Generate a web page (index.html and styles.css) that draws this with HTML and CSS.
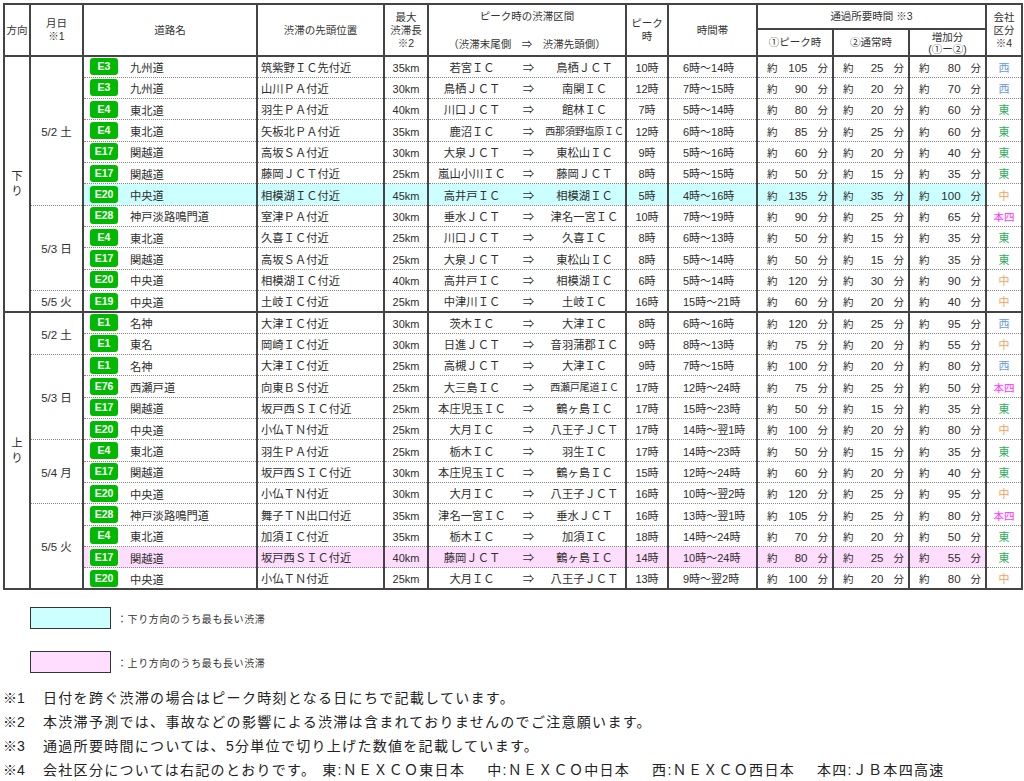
FILE: index.html
```html
<!DOCTYPE html>
<html lang="ja">
<head>
<meta charset="utf-8">
<title>渋滞予測</title>
<link rel="stylesheet" href="styles.css">
</head>
<body>
<table class="grid">
<colgroup>
<col class="c-dir"><col class="c-date"><col class="c-road"><col class="c-head"><col class="c-len"><col class="c-sec"><col class="c-peak"><col class="c-band"><col class="c-t1"><col class="c-t2"><col class="c-t3"><col class="c-co">
</colgroup>
<thead>
<tr class="h1">
<th rowspan="2">方向</th>
<th rowspan="2">月日<br>※1</th>
<th rowspan="2">道路名</th>
<th rowspan="2">渋滞の先頭位置</th>
<th rowspan="2">最大<br>渋滞長<br>※2</th>
<th rowspan="2" class="hsec"><div class="hsec-in"><span>ピーク時の渋滞区間</span><span>（渋滞末尾側　⇒　渋滞先頭側）</span></div></th>
<th rowspan="2">ピーク<br>時</th>
<th rowspan="2">時間帯</th>
<th colspan="3">通過所要時間 ※3</th>
<th rowspan="2">会社<br>区分<br>※4</th>
</tr>
<tr class="h2">
<th>①ピーク時</th>
<th>②通常時</th>
<th class="inc">増加分<br>(①ー②)</th>
</tr>
</thead>
<tbody class="down">
<tr>
<td class="dir" rowspan="12">下<br>り</td>
<td class="date" rowspan="7">5/2 土</td>
<td class="road"><div class="rd"><span class="badge">E3</span><span class="rn">九州道</span></div></td>
<td class="head">筑紫野ＩＣ先付近</td>
<td class="len">35km</td>
<td class="sec"><div class="sec3"><span>若宮ＩＣ</span><span>⇒</span><span>鳥栖ＪＣＴ</span></div></td>
<td class="peak">10時</td>
<td class="band">6時～14時</td>
<td class="t"><div class="tm"><span>約</span><b>105</b><span>分</span></div></td>
<td class="t"><div class="tm"><span>約</span><b>25</b><span>分</span></div></td>
<td class="t"><div class="tm"><span>約</span><b>80</b><span>分</span></div></td>
<td class="co west">西</td>
</tr>
<tr>
<td class="road"><div class="rd"><span class="badge">E3</span><span class="rn">九州道</span></div></td>
<td class="head">山川ＰＡ付近</td>
<td class="len">30km</td>
<td class="sec"><div class="sec3"><span>鳥栖ＪＣＴ</span><span>⇒</span><span>南関ＩＣ</span></div></td>
<td class="peak">12時</td>
<td class="band">7時～15時</td>
<td class="t"><div class="tm"><span>約</span><b>90</b><span>分</span></div></td>
<td class="t"><div class="tm"><span>約</span><b>20</b><span>分</span></div></td>
<td class="t"><div class="tm"><span>約</span><b>70</b><span>分</span></div></td>
<td class="co west">西</td>
</tr>
<tr>
<td class="road"><div class="rd"><span class="badge">E4</span><span class="rn">東北道</span></div></td>
<td class="head">羽生ＰＡ付近</td>
<td class="len">40km</td>
<td class="sec"><div class="sec3"><span>川口ＪＣＴ</span><span>⇒</span><span>館林ＩＣ</span></div></td>
<td class="peak">7時</td>
<td class="band">5時～14時</td>
<td class="t"><div class="tm"><span>約</span><b>80</b><span>分</span></div></td>
<td class="t"><div class="tm"><span>約</span><b>20</b><span>分</span></div></td>
<td class="t"><div class="tm"><span>約</span><b>60</b><span>分</span></div></td>
<td class="co east">東</td>
</tr>
<tr>
<td class="road"><div class="rd"><span class="badge">E4</span><span class="rn">東北道</span></div></td>
<td class="head">矢板北ＰＡ付近</td>
<td class="len">35km</td>
<td class="sec"><div class="sec3"><span>鹿沼ＩＣ</span><span>⇒</span><span class="narrow">西那須野塩原ＩＣ</span></div></td>
<td class="peak">12時</td>
<td class="band">6時～18時</td>
<td class="t"><div class="tm"><span>約</span><b>85</b><span>分</span></div></td>
<td class="t"><div class="tm"><span>約</span><b>25</b><span>分</span></div></td>
<td class="t"><div class="tm"><span>約</span><b>60</b><span>分</span></div></td>
<td class="co east">東</td>
</tr>
<tr>
<td class="road"><div class="rd"><span class="badge">E17</span><span class="rn">関越道</span></div></td>
<td class="head">高坂ＳＡ付近</td>
<td class="len">30km</td>
<td class="sec"><div class="sec3"><span>大泉ＪＣＴ</span><span>⇒</span><span>東松山ＩＣ</span></div></td>
<td class="peak">9時</td>
<td class="band">5時～16時</td>
<td class="t"><div class="tm"><span>約</span><b>60</b><span>分</span></div></td>
<td class="t"><div class="tm"><span>約</span><b>20</b><span>分</span></div></td>
<td class="t"><div class="tm"><span>約</span><b>40</b><span>分</span></div></td>
<td class="co east">東</td>
</tr>
<tr>
<td class="road"><div class="rd"><span class="badge">E17</span><span class="rn">関越道</span></div></td>
<td class="head">藤岡ＪＣＴ付近</td>
<td class="len">25km</td>
<td class="sec"><div class="sec3"><span>嵐山小川ＩＣ</span><span>⇒</span><span>藤岡ＪＣＴ</span></div></td>
<td class="peak">8時</td>
<td class="band">5時～15時</td>
<td class="t"><div class="tm"><span>約</span><b>50</b><span>分</span></div></td>
<td class="t"><div class="tm"><span>約</span><b>15</b><span>分</span></div></td>
<td class="t"><div class="tm"><span>約</span><b>35</b><span>分</span></div></td>
<td class="co east">東</td>
</tr>
<tr class="hl-cyan">
<td class="road"><div class="rd"><span class="badge">E20</span><span class="rn">中央道</span></div></td>
<td class="head">相模湖ＩＣ付近</td>
<td class="len">45km</td>
<td class="sec"><div class="sec3"><span>高井戸ＩＣ</span><span>⇒</span><span>相模湖ＩＣ</span></div></td>
<td class="peak">5時</td>
<td class="band">4時～16時</td>
<td class="t"><div class="tm"><span>約</span><b>135</b><span>分</span></div></td>
<td class="t"><div class="tm"><span>約</span><b>35</b><span>分</span></div></td>
<td class="t"><div class="tm"><span>約</span><b>100</b><span>分</span></div></td>
<td class="co mid">中</td>
</tr>
<tr>
<td class="date" rowspan="4">5/3 日</td>
<td class="road"><div class="rd"><span class="badge">E28</span><span class="rn">神戸淡路鳴門道</span></div></td>
<td class="head">室津ＰＡ付近</td>
<td class="len">30km</td>
<td class="sec"><div class="sec3"><span>垂水ＪＣＴ</span><span>⇒</span><span>津名一宮ＩＣ</span></div></td>
<td class="peak">10時</td>
<td class="band">7時～19時</td>
<td class="t"><div class="tm"><span>約</span><b>90</b><span>分</span></div></td>
<td class="t"><div class="tm"><span>約</span><b>25</b><span>分</span></div></td>
<td class="t"><div class="tm"><span>約</span><b>65</b><span>分</span></div></td>
<td class="co hon">本四</td>
</tr>
<tr>
<td class="road"><div class="rd"><span class="badge">E4</span><span class="rn">東北道</span></div></td>
<td class="head">久喜ＩＣ付近</td>
<td class="len">25km</td>
<td class="sec"><div class="sec3"><span>川口ＪＣＴ</span><span>⇒</span><span>久喜ＩＣ</span></div></td>
<td class="peak">8時</td>
<td class="band">6時～13時</td>
<td class="t"><div class="tm"><span>約</span><b>50</b><span>分</span></div></td>
<td class="t"><div class="tm"><span>約</span><b>15</b><span>分</span></div></td>
<td class="t"><div class="tm"><span>約</span><b>35</b><span>分</span></div></td>
<td class="co east">東</td>
</tr>
<tr>
<td class="road"><div class="rd"><span class="badge">E17</span><span class="rn">関越道</span></div></td>
<td class="head">高坂ＳＡ付近</td>
<td class="len">25km</td>
<td class="sec"><div class="sec3"><span>大泉ＪＣＴ</span><span>⇒</span><span>東松山ＩＣ</span></div></td>
<td class="peak">8時</td>
<td class="band">5時～14時</td>
<td class="t"><div class="tm"><span>約</span><b>50</b><span>分</span></div></td>
<td class="t"><div class="tm"><span>約</span><b>15</b><span>分</span></div></td>
<td class="t"><div class="tm"><span>約</span><b>35</b><span>分</span></div></td>
<td class="co east">東</td>
</tr>
<tr>
<td class="road"><div class="rd"><span class="badge">E20</span><span class="rn">中央道</span></div></td>
<td class="head">相模湖ＩＣ付近</td>
<td class="len">40km</td>
<td class="sec"><div class="sec3"><span>高井戸ＩＣ</span><span>⇒</span><span>相模湖ＩＣ</span></div></td>
<td class="peak">6時</td>
<td class="band">5時～14時</td>
<td class="t"><div class="tm"><span>約</span><b>120</b><span>分</span></div></td>
<td class="t"><div class="tm"><span>約</span><b>30</b><span>分</span></div></td>
<td class="t"><div class="tm"><span>約</span><b>90</b><span>分</span></div></td>
<td class="co mid">中</td>
</tr>
<tr>
<td class="date">5/5 火</td>
<td class="road"><div class="rd"><span class="badge">E19</span><span class="rn">中央道</span></div></td>
<td class="head">土岐ＩＣ付近</td>
<td class="len">25km</td>
<td class="sec"><div class="sec3"><span>中津川ＩＣ</span><span>⇒</span><span>土岐ＩＣ</span></div></td>
<td class="peak">16時</td>
<td class="band">15時～21時</td>
<td class="t"><div class="tm"><span>約</span><b>60</b><span>分</span></div></td>
<td class="t"><div class="tm"><span>約</span><b>20</b><span>分</span></div></td>
<td class="t"><div class="tm"><span>約</span><b>40</b><span>分</span></div></td>
<td class="co mid">中</td>
</tr>
</tbody>
<tbody class="up">
<tr>
<td class="dir" rowspan="13">上<br>り</td>
<td class="date" rowspan="2">5/2 土</td>
<td class="road"><div class="rd"><span class="badge">E1</span><span class="rn">名神</span></div></td>
<td class="head">大津ＩＣ付近</td>
<td class="len">30km</td>
<td class="sec"><div class="sec3"><span>茨木ＩＣ</span><span>⇒</span><span>大津ＩＣ</span></div></td>
<td class="peak">8時</td>
<td class="band">6時～16時</td>
<td class="t"><div class="tm"><span>約</span><b>120</b><span>分</span></div></td>
<td class="t"><div class="tm"><span>約</span><b>25</b><span>分</span></div></td>
<td class="t"><div class="tm"><span>約</span><b>95</b><span>分</span></div></td>
<td class="co west">西</td>
</tr>
<tr>
<td class="road"><div class="rd"><span class="badge">E1</span><span class="rn">東名</span></div></td>
<td class="head">岡崎ＩＣ付近</td>
<td class="len">30km</td>
<td class="sec"><div class="sec3"><span>日進ＪＣＴ</span><span>⇒</span><span>音羽蒲郡ＩＣ</span></div></td>
<td class="peak">9時</td>
<td class="band">8時～13時</td>
<td class="t"><div class="tm"><span>約</span><b>75</b><span>分</span></div></td>
<td class="t"><div class="tm"><span>約</span><b>20</b><span>分</span></div></td>
<td class="t"><div class="tm"><span>約</span><b>55</b><span>分</span></div></td>
<td class="co mid">中</td>
</tr>
<tr>
<td class="date" rowspan="4">5/3 日</td>
<td class="road"><div class="rd"><span class="badge">E1</span><span class="rn">名神</span></div></td>
<td class="head">大津ＩＣ付近</td>
<td class="len">25km</td>
<td class="sec"><div class="sec3"><span>高槻ＪＣＴ</span><span>⇒</span><span>大津ＩＣ</span></div></td>
<td class="peak">9時</td>
<td class="band">7時～15時</td>
<td class="t"><div class="tm"><span>約</span><b>100</b><span>分</span></div></td>
<td class="t"><div class="tm"><span>約</span><b>20</b><span>分</span></div></td>
<td class="t"><div class="tm"><span>約</span><b>80</b><span>分</span></div></td>
<td class="co west">西</td>
</tr>
<tr>
<td class="road"><div class="rd"><span class="badge">E76</span><span class="rn">西瀬戸道</span></div></td>
<td class="head">向東ＢＳ付近</td>
<td class="len">25km</td>
<td class="sec"><div class="sec3"><span>大三島ＩＣ</span><span>⇒</span><span class="narrow">西瀬戸尾道ＩＣ</span></div></td>
<td class="peak">17時</td>
<td class="band">12時～24時</td>
<td class="t"><div class="tm"><span>約</span><b>75</b><span>分</span></div></td>
<td class="t"><div class="tm"><span>約</span><b>25</b><span>分</span></div></td>
<td class="t"><div class="tm"><span>約</span><b>50</b><span>分</span></div></td>
<td class="co hon">本四</td>
</tr>
<tr>
<td class="road"><div class="rd"><span class="badge">E17</span><span class="rn">関越道</span></div></td>
<td class="head">坂戸西ＳＩＣ付近</td>
<td class="len">25km</td>
<td class="sec"><div class="sec3"><span>本庄児玉ＩＣ</span><span>⇒</span><span>鶴ヶ島ＩＣ</span></div></td>
<td class="peak">17時</td>
<td class="band">15時～23時</td>
<td class="t"><div class="tm"><span>約</span><b>50</b><span>分</span></div></td>
<td class="t"><div class="tm"><span>約</span><b>15</b><span>分</span></div></td>
<td class="t"><div class="tm"><span>約</span><b>35</b><span>分</span></div></td>
<td class="co east">東</td>
</tr>
<tr>
<td class="road"><div class="rd"><span class="badge">E20</span><span class="rn">中央道</span></div></td>
<td class="head">小仏ＴＮ付近</td>
<td class="len">25km</td>
<td class="sec"><div class="sec3"><span>大月ＩＣ</span><span>⇒</span><span>八王子ＪＣＴ</span></div></td>
<td class="peak">17時</td>
<td class="band">14時～翌1時</td>
<td class="t"><div class="tm"><span>約</span><b>100</b><span>分</span></div></td>
<td class="t"><div class="tm"><span>約</span><b>20</b><span>分</span></div></td>
<td class="t"><div class="tm"><span>約</span><b>80</b><span>分</span></div></td>
<td class="co mid">中</td>
</tr>
<tr>
<td class="date" rowspan="3">5/4 月</td>
<td class="road"><div class="rd"><span class="badge">E4</span><span class="rn">東北道</span></div></td>
<td class="head">羽生ＰＡ付近</td>
<td class="len">25km</td>
<td class="sec"><div class="sec3"><span>栃木ＩＣ</span><span>⇒</span><span>羽生ＩＣ</span></div></td>
<td class="peak">17時</td>
<td class="band">14時～23時</td>
<td class="t"><div class="tm"><span>約</span><b>50</b><span>分</span></div></td>
<td class="t"><div class="tm"><span>約</span><b>15</b><span>分</span></div></td>
<td class="t"><div class="tm"><span>約</span><b>35</b><span>分</span></div></td>
<td class="co east">東</td>
</tr>
<tr>
<td class="road"><div class="rd"><span class="badge">E17</span><span class="rn">関越道</span></div></td>
<td class="head">坂戸西ＳＩＣ付近</td>
<td class="len">30km</td>
<td class="sec"><div class="sec3"><span>本庄児玉ＩＣ</span><span>⇒</span><span>鶴ヶ島ＩＣ</span></div></td>
<td class="peak">15時</td>
<td class="band">12時～24時</td>
<td class="t"><div class="tm"><span>約</span><b>60</b><span>分</span></div></td>
<td class="t"><div class="tm"><span>約</span><b>20</b><span>分</span></div></td>
<td class="t"><div class="tm"><span>約</span><b>40</b><span>分</span></div></td>
<td class="co east">東</td>
</tr>
<tr>
<td class="road"><div class="rd"><span class="badge">E20</span><span class="rn">中央道</span></div></td>
<td class="head">小仏ＴＮ付近</td>
<td class="len">30km</td>
<td class="sec"><div class="sec3"><span>大月ＩＣ</span><span>⇒</span><span>八王子ＪＣＴ</span></div></td>
<td class="peak">16時</td>
<td class="band">10時～翌2時</td>
<td class="t"><div class="tm"><span>約</span><b>120</b><span>分</span></div></td>
<td class="t"><div class="tm"><span>約</span><b>25</b><span>分</span></div></td>
<td class="t"><div class="tm"><span>約</span><b>95</b><span>分</span></div></td>
<td class="co mid">中</td>
</tr>
<tr>
<td class="date" rowspan="4">5/5 火</td>
<td class="road"><div class="rd"><span class="badge">E28</span><span class="rn">神戸淡路鳴門道</span></div></td>
<td class="head">舞子ＴＮ出口付近</td>
<td class="len">35km</td>
<td class="sec"><div class="sec3"><span>津名一宮ＩＣ</span><span>⇒</span><span>垂水ＪＣＴ</span></div></td>
<td class="peak">16時</td>
<td class="band">13時～翌1時</td>
<td class="t"><div class="tm"><span>約</span><b>105</b><span>分</span></div></td>
<td class="t"><div class="tm"><span>約</span><b>25</b><span>分</span></div></td>
<td class="t"><div class="tm"><span>約</span><b>80</b><span>分</span></div></td>
<td class="co hon">本四</td>
</tr>
<tr>
<td class="road"><div class="rd"><span class="badge">E4</span><span class="rn">東北道</span></div></td>
<td class="head">加須ＩＣ付近</td>
<td class="len">35km</td>
<td class="sec"><div class="sec3"><span>栃木ＩＣ</span><span>⇒</span><span>加須ＩＣ</span></div></td>
<td class="peak">18時</td>
<td class="band">14時～24時</td>
<td class="t"><div class="tm"><span>約</span><b>70</b><span>分</span></div></td>
<td class="t"><div class="tm"><span>約</span><b>20</b><span>分</span></div></td>
<td class="t"><div class="tm"><span>約</span><b>50</b><span>分</span></div></td>
<td class="co east">東</td>
</tr>
<tr class="hl-pink">
<td class="road"><div class="rd"><span class="badge">E17</span><span class="rn">関越道</span></div></td>
<td class="head">坂戸西ＳＩＣ付近</td>
<td class="len">40km</td>
<td class="sec"><div class="sec3"><span>藤岡ＪＣＴ</span><span>⇒</span><span>鶴ヶ島ＩＣ</span></div></td>
<td class="peak">14時</td>
<td class="band">10時～24時</td>
<td class="t"><div class="tm"><span>約</span><b>80</b><span>分</span></div></td>
<td class="t"><div class="tm"><span>約</span><b>25</b><span>分</span></div></td>
<td class="t"><div class="tm"><span>約</span><b>55</b><span>分</span></div></td>
<td class="co east">東</td>
</tr>
<tr>
<td class="road"><div class="rd"><span class="badge">E20</span><span class="rn">中央道</span></div></td>
<td class="head">小仏ＴＮ付近</td>
<td class="len">25km</td>
<td class="sec"><div class="sec3"><span>大月ＩＣ</span><span>⇒</span><span>八王子ＪＣＴ</span></div></td>
<td class="peak">13時</td>
<td class="band">9時～翌2時</td>
<td class="t"><div class="tm"><span>約</span><b>100</b><span>分</span></div></td>
<td class="t"><div class="tm"><span>約</span><b>20</b><span>分</span></div></td>
<td class="t"><div class="tm"><span>約</span><b>80</b><span>分</span></div></td>
<td class="co mid">中</td>
</tr>
</tbody>
</table>

<div class="legend">
<div class="lg"><span class="box cyan"></span><span class="lt">：下り方向のうち最も長い渋滞</span></div>
<div class="lg"><span class="box pink"></span><span class="lt">：上り方向のうち最も長い渋滞</span></div>
</div>

<div class="notes">
<p><span class="mk">※1</span><span>日付を跨ぐ渋滞の場合はピーク時刻となる日にちで記載しています。</span></p>
<p><span class="mk">※2</span><span>本渋滞予測では、事故などの影響による渋滞は含まれておりませんのでご注意願います。</span></p>
<p><span class="mk">※3</span><span>通過所要時間については、5分単位で切り上げた数値を記載しています。</span></p>
<p><span class="mk">※4</span><span>会社区分については右記のとおりです。</span><span class="co-item first">東:ＮＥＸＣＯ東日本</span><span class="co-item">中:ＮＥＸＣＯ中日本</span><span class="co-item">西:ＮＥＸＣＯ西日本</span><span class="co-item">本四:ＪＢ本四高速</span></p>
</div>
</body>
</html>
```

FILE: styles.css
```css
html, body {
  margin: 0;
  padding: 0;
  background: #fff;
}
body {
  padding: 3px 0 0 3px;
  font-family: "Liberation Sans", "Noto Sans CJK JP", sans-serif;
  color: #2e2e2e;
}

.grid {
  border-collapse: collapse;
  table-layout: fixed;
  width: 1018px;
  border: 2px solid #444;
  font-size: 11px;
}
.c-dir { width: 26px; }
.c-date { width: 53px; }
.c-road { width: 174px; }
.c-head { width: 127px; }
.c-len { width: 44px; }
.c-sec { width: 198px; }
.c-peak { width: 42px; }
.c-band { width: 89px; }
.c-t1 { width: 76px; }
.c-t2 { width: 76px; }
.c-t3 { width: 77px; }
.c-co { width: 36px; }

.grid th {
  font-weight: normal;
  font-size: 10.5px;
  line-height: 13px;
  border: 2px solid #444;
  padding: 0;
  text-align: center;
  vertical-align: middle;
  color: #333;
}
.grid thead tr.h1 { height: 25px; }
.grid thead tr.h2 { height: 27px; }
.grid th.inc { line-height: 12px; padding-top: 1px; }
.hsec-in {
  height: 50px;
  display: flex;
  flex-direction: column;
  justify-content: space-between;
  padding: 5px 0 4px;
  box-sizing: border-box;
}

.grid td {
  padding: 2px 0 0;
  border-left: 2px solid #444;
  border-right: 2px solid #444;
  border-top: 1px dotted #888;
  border-bottom: 1px dotted #888;
  vertical-align: middle;
  white-space: nowrap;
  line-height: 14px;
}
.grid tbody tr { height: 21.33px; }
.grid tbody.up { border-top: 2px solid #444; }

.dir, .date { text-align: center; font-size: 11.5px; }
.grid td.dir { line-height: 15px; padding-top: 0; }

.grid td.road { padding: 0 0 0 6px; font-size: 11.3px; }
.rd {
  display: flex;
  align-items: center;
}
.rn { padding-top: 3px; }
.badge {
  flex: none;
  width: 28px;
  height: 17px;
  line-height: 17px;
  margin-right: 12px;
  border-radius: 3px;
  background: #00b900;
  color: #fff;
  font-weight: bold;
  font-size: 10.5px;
  text-align: center;
}
.grid td.head { padding-left: 3px; font-size: 11.3px; }
.len, .peak { text-align: center; }
.sec3 {
  display: grid;
  grid-template-columns: 86px 27px 85px;
  text-align: center;
  font-size: 11.3px;
}
.sec3 .narrow { font-size: 10px; letter-spacing: -0.2px; }
.grid td.band { padding-left: 14px; }

.tm {
  display: flex;
  align-items: center;
  padding: 0 4px 0 9px;
}
.tm b {
  flex: 1;
  text-align: right;
  font-weight: normal;
  font-size: 11.5px;
  margin-right: 10px;
}
.tm span { font-size: 10.5px; }

.co { text-align: center; background: #fff; font-size: 11px; }
.west { color: #6b9be0; }
.east { color: #2fae5e; }
.mid { color: #f7a05a; }
.hon { color: #ff33ff; font-size: 10.5px; }

.hl-cyan { background: #ccffff; }
.hl-pink { background: #ffddfe; }

.legend {
  padding: 17px 0 0 27px;
}
.lg {
  display: flex;
  align-items: center;
  height: 22px;
  margin-bottom: 22px;
}
.box {
  width: 79px;
  height: 20px;
  border: 1px solid #333;
  margin-right: 6px;
}
.box.cyan { background: #ccffff; }
.box.pink { background: #ffddfe; }
.lt { font-size: 10px; letter-spacing: 0.6px; color: #333; }

.notes {
  margin-top: -9px;
}
.notes p {
  margin: 0;
  font-size: 14px;
  line-height: 24px;
  letter-spacing: 1.3px;
  color: #222;
  white-space: nowrap;
}
.notes .mk {
  display: inline-block;
  width: 40px;
  letter-spacing: 0;
}
.co-item { margin-left: 22px; }
.co-item.first { margin-left: 6px; }
```
